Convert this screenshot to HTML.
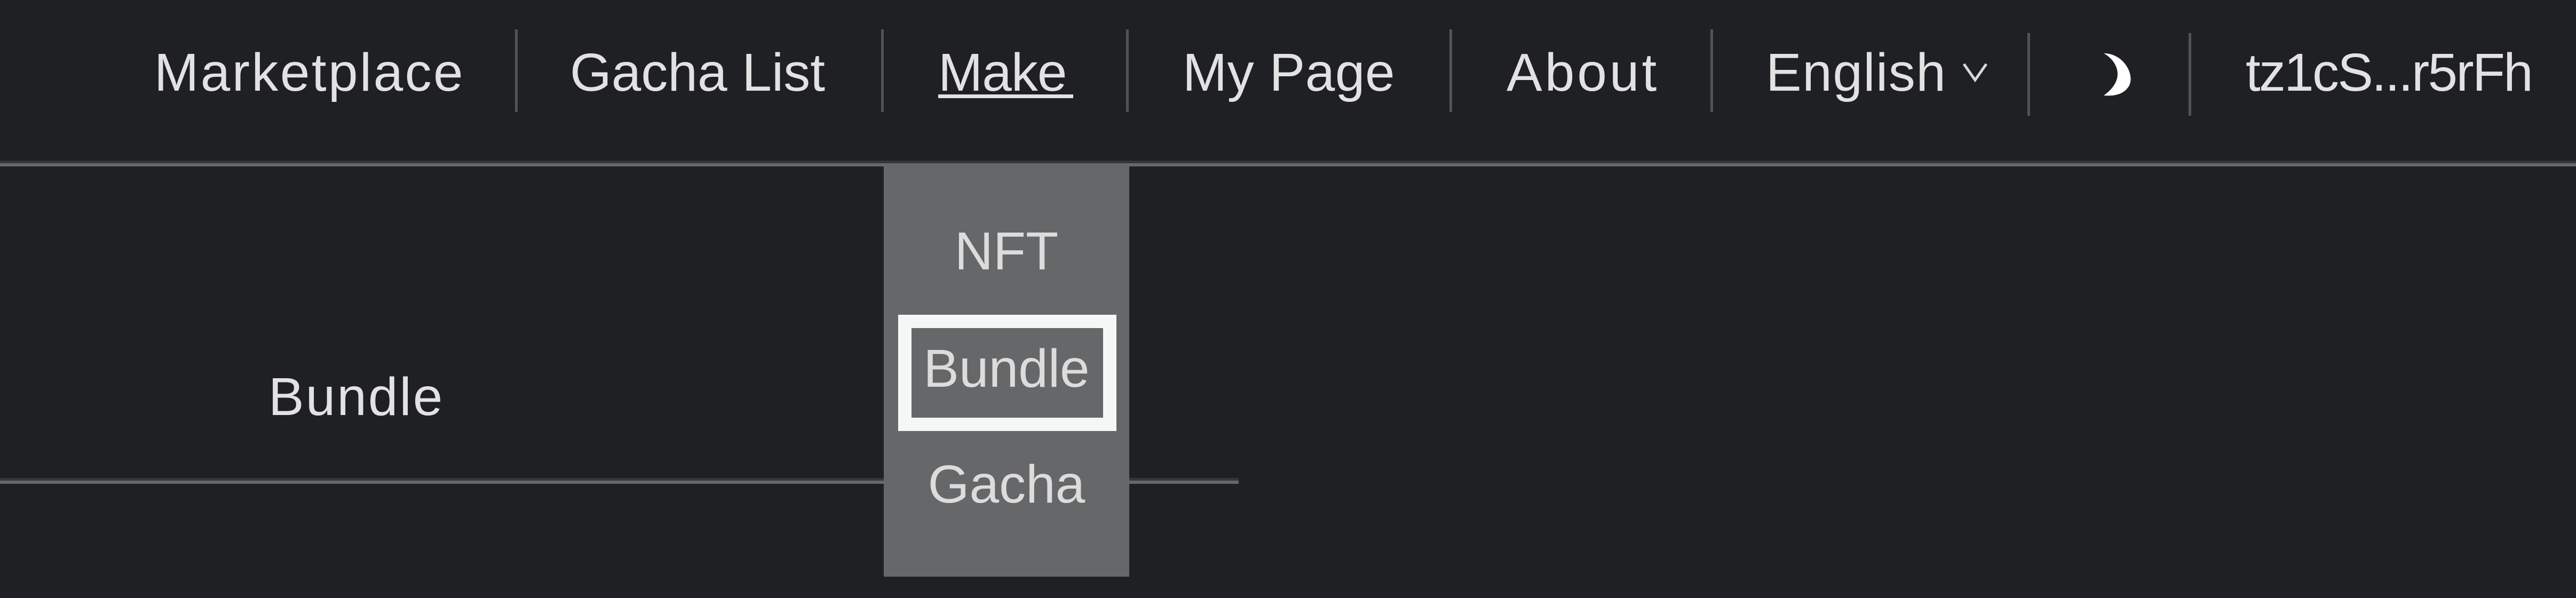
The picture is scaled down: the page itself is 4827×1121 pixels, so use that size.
<!DOCTYPE html>
<html><head><meta charset="utf-8"><style>
html,body{margin:0;padding:0;}
body{width:4827px;height:1121px;background:#1f2024;position:relative;overflow:hidden;font-family:"Liberation Sans",sans-serif;}
.t{position:absolute;font-size:100px;line-height:100px;color:#e2e2e2;white-space:nowrap;}
.s{position:absolute;width:5px;background:#505357;}
</style></head><body>
<div class="t" style="left:289px;top:86px;letter-spacing:3.4px">Marketplace</div>
<div class="s" style="left:965px;top:55px;height:155px"></div>
<div class="t" style="left:1068px;top:86px">Gacha List</div>
<div class="s" style="left:1651px;top:55px;height:155px"></div>
<div class="t" style="left:1758px;top:86px;width:253px;letter-spacing:-1px">Make</div>
<div style="position:absolute;left:1758px;top:177px;width:253px;height:7px;background:#e2e2e2"></div>
<div class="s" style="left:2110px;top:55px;height:155px"></div>
<div class="t" style="left:2216px;top:86px;letter-spacing:0.5px">My Page</div>
<div class="s" style="left:2716px;top:55px;height:155px"></div>
<div class="t" style="left:2823px;top:86px;letter-spacing:5px">About</div>
<div class="s" style="left:3205px;top:55px;height:155px"></div>
<div class="t" style="left:3309px;top:86px;letter-spacing:1.5px">English</div>
<svg style="position:absolute;left:3677px;top:117px" width="48" height="38" viewBox="0 0 48 38"><path d="M3 3 L24 33 L45 3" fill="none" stroke="#d8d8d8" stroke-width="5"/></svg>
<div class="s" style="left:3799px;top:62px;height:155px"></div>
<svg style="position:absolute;left:3940px;top:95px" width="58" height="88" viewBox="0 0 58 88"><path d="M2 5 C40 5 60 45 50 65 C42 80 25 86 2 84 C22 70 28 55 28 44 C28 30 20 15 2 5 Z" fill="#fff"/></svg>
<div class="s" style="left:4101px;top:62px;height:155px"></div>
<div class="t" style="left:4208px;top:86px;letter-spacing:-2.8px">tz1cS...r5rFh</div>
<div style="position:absolute;left:0;top:301px;width:4827px;height:5px;background:#34363a"></div>
<div style="position:absolute;left:0;top:306px;width:4827px;height:6px;background:#666769"></div>
<div class="t" style="left:503px;top:694px;letter-spacing:3px">Bundle</div>
<div style="position:absolute;left:0;top:896px;width:2321px;height:5px;background:#34363a"></div>
<div style="position:absolute;left:0;top:901px;width:2321px;height:6px;background:#666769"></div>
<div style="position:absolute;left:1656px;top:312px;width:460px;height:769px;background:#666769"></div>
<div class="t" style="left:1656px;width:460px;text-align:center;top:421px;color:#dcdcdc">NFT</div>
<div style="position:absolute;left:1683px;top:590px;width:359px;height:168px;border:25px solid #f5f6f6"></div>
<div class="t" style="left:1656px;width:460px;text-align:center;top:641px;color:#dcdcdc">Bundle</div>
<div class="t" style="left:1656px;width:460px;text-align:center;top:858px;color:#dcdcdc">Gacha</div>
</body></html>
